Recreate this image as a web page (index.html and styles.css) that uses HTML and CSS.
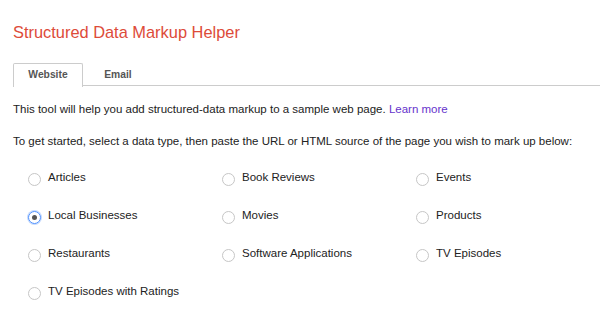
FILE: index.html
```html
<!DOCTYPE html>
<html lang="en">
<head>
  <meta charset="UTF-8">
  <link rel="stylesheet" href="styles.css">
</head>
<body>
  <h1 class="title">Structured Data Markup Helper</h1>

  <div class="tabs">
    <div class="tab active">Website</div>
    <div class="tab">Email</div>
  </div>

  <p class="intro">This tool will help you add structured-data markup to a sample web page. <a href="#">Learn more</a></p>
  <p class="intro">To get started, select a data type, then paste the URL or HTML source of the page you wish to mark up below:</p>

  <div class="types">
    <label class="type"><span class="radio"></span>Articles</label>
    <label class="type"><span class="radio"></span>Book Reviews</label>
    <label class="type"><span class="radio"></span>Events</label>
    <label class="type"><span class="radio checked"></span>Local Businesses</label>
    <label class="type"><span class="radio"></span>Movies</label>
    <label class="type"><span class="radio"></span>Products</label>
    <label class="type"><span class="radio"></span>Restaurants</label>
    <label class="type"><span class="radio"></span>Software Applications</label>
    <label class="type"><span class="radio"></span>TV Episodes</label>
    <label class="type"><span class="radio"></span>TV Episodes with Ratings</label>
  </div>
</body>
</html>
```

FILE: styles.css
```css
body {
  margin: 0;
  padding: 0 0 0 13px;
  font-family: "Liberation Sans", Arial, sans-serif;
  font-size: 11.5px;
  color: #222;
  background: #fff;
}

.title {
  margin: 0;
  padding-top: 21px;
  font-size: 16.4px;
  font-weight: normal;
  line-height: 22px;
  color: #dd4b39;
}

.tabs {
  display: flex;
  margin-top: 20px;
  border-bottom: 1px solid #ccc;
  height: 22px;
}

.tab {
  width: 70px;
  box-sizing: border-box;
  text-align: center;
  font-size: 10.3px;
  font-weight: bold;
  color: #555;
  line-height: 22px;
  border: 1px solid transparent;
  border-bottom: none;
}

.tab.active {
  border-color: #ccc;
  background: #fff;
  height: 24px;
  border-radius: 2px 2px 0 0;
}

.intro {
  margin: 16px 0 0;
  line-height: 15px;
}

.intro + .intro {
  margin-top: 17px;
}

.intro a {
  color: #6633cc;
  text-decoration: none;
}

.types {
  display: grid;
  grid-template-columns: 194px 194px 194px;
  grid-auto-rows: 38px;
  margin-top: 19px;
  padding-left: 15px;
}

.type {
  display: flex;
  align-items: center;
  gap: 7px;
  height: 19px;
  line-height: 15px;
}

.radio {
  width: 11px;
  height: 11px;
  border: 1px solid #c6c6c6;
  border-radius: 50%;
  position: relative;
  margin-top: 3px;
  flex: none;
}

.radio.checked {
  border-color: #4d90fe;
  box-shadow: 0 0 0 1px #c6dafc;
}

.radio.checked::after {
  content: "";
  position: absolute;
  left: 3px;
  top: 3px;
  width: 5px;
  height: 5px;
  border-radius: 50%;
  background: #555;
}
```
